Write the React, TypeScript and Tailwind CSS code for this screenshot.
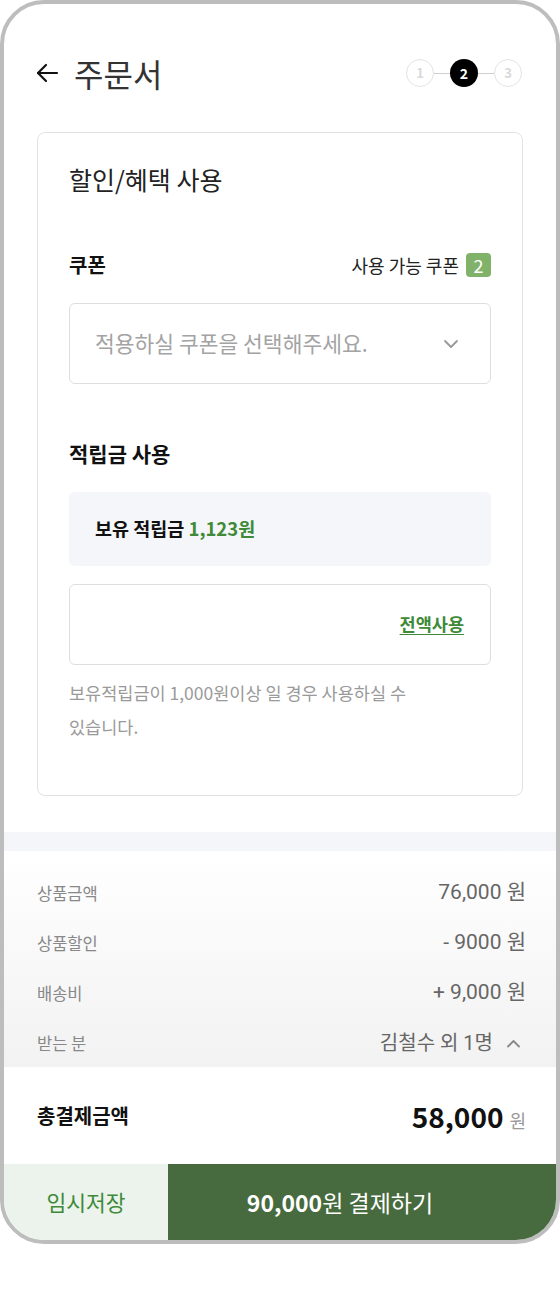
import React from "react";

const font = { fontFamily: '"Noto Sans CJK KR", "Noto Sans", sans-serif' };
const numFont = { fontFamily: 'Roboto, "Noto Sans CJK KR", sans-serif' };

const Step = ({ n, active }: { n: number; active?: boolean }) => (
	<div
		className={
			active
				? "flex h-7 w-7 items-center justify-center rounded-full bg-black text-[14px] font-bold text-white"
				: "flex h-7 w-7 items-center justify-center rounded-full border-[1.5px] border-[#e3e3e3] text-[13px] font-semibold text-[#d9d9d9]"
		}
	>
		{n}
	</div>
);

const SummaryRow = ({
	label,
	children,
}: {
	label: string;
	children: React.ReactNode;
}) => (
	<div className="flex h-[50px] items-center justify-between">
		<span className="text-[16.5px] text-[#888]">{label}</span>
		{children}
	</div>
);

export default function App() {
	return (
		<div className="min-h-[1296px] bg-white" style={font}>
			<div className="flex h-[1244px] w-[560px] flex-col overflow-hidden rounded-[44px] border-4 border-[#bdbdbd] bg-white">
				{/* Header */}
				<div className="mt-[49px] flex h-[40px] items-center justify-between pl-[31px] pr-[34px]">
					<div className="flex items-center gap-[15px]">
						<svg width="24" height="24" viewBox="0 0 24 24" fill="none" stroke="#111" strokeWidth={2.2} strokeLinecap="round" strokeLinejoin="round">
							<path d="M22 12H3" />
							<path d="M11 4l-8 8 8 8" />
						</svg>
						<span className="text-[32px] leading-[40px] text-[#333]">주문서</span>
					</div>
					<div className="flex items-center">
						<Step n={1} />
						<div className="h-px w-4 bg-[#cfcfcf]" />
						<Step n={2} active />
						<div className="h-px w-4 bg-[#cfcfcf]" />
						<Step n={3} />
					</div>
				</div>

				{/* Discount card */}
				<div className="mx-[33px] mt-[39px] rounded-[8px] border border-[#e2e2e5] px-[31px] pb-[51px] pt-[30px]">
					<div className="text-[25px] leading-[32px] text-[#222]">할인/혜택 사용</div>

					<div className="mt-[56px] flex h-[28px] items-center justify-between">
						<span className="text-[20px] font-bold text-[#111]">쿠폰</span>
						<div className="flex items-center gap-[7px]">
							<span className="text-[18px] text-[#222]">사용 가능 쿠폰</span>
							<span className="flex h-[24px] w-[25px] items-center justify-center rounded-[4px] bg-[#80b26a] text-[18px] leading-none text-white">
								2
							</span>
						</div>
					</div>

					<div className="mt-[24px] flex h-[81px] items-center justify-between rounded-[6px] border border-[#dedee0] pl-[25px] pr-[31px]">
						<span className="text-[21.5px] text-[#a3a3a3]">적용하실 쿠폰을 선택해주세요.</span>
						<svg width="16" height="10" viewBox="0 0 16 10" fill="none" stroke="#999" strokeWidth={1.8} strokeLinecap="round" strokeLinejoin="round">
							<path d="M2 2l6 6 6-6" />
						</svg>
					</div>

					<div className="mt-[55px] text-[21px] font-bold leading-[28px] text-[#111]">적립금 사용</div>

					<div className="mt-[25px] flex h-[74px] items-center rounded-[6px] bg-[#f5f6f9] px-[26px]">
						<span className="text-[18.5px] font-bold text-[#111]">
							보유 적립금 <span className="text-[#3e8a38]">1,123원</span>
						</span>
					</div>

					<div className="mt-[18px] flex h-[81px] items-center justify-end rounded-[6px] border border-[#dedee0] pr-[26px]">
						<span className="text-[17.5px] font-bold text-[#3e8a38] underline underline-offset-[3px]">전액사용</span>
					</div>

					<p className="mt-[11px] text-[17.5px] leading-[34px] text-[#9a9a9a]">
						보유적립금이 1,000원이상 일 경우 사용하실 수
						<br />
						있습니다.
					</p>
				</div>

				<div className="mt-[36px] h-[19px] bg-[#f5f6f9]" />

				{/* Summary */}
				<div className="h-[216px] bg-linear-to-b from-white to-[#f2f2f2] pl-[33px] pr-[30px] pt-[17px]">
					<SummaryRow label="상품금액">
						<span className="text-[21px] text-[#666]" style={numFont}>76,000 원</span>
					</SummaryRow>
					<SummaryRow label="상품할인">
						<span className="text-[21px] text-[#666]" style={numFont}>- 9000 원</span>
					</SummaryRow>
					<SummaryRow label="배송비">
						<span className="text-[21px] text-[#666]" style={numFont}>+ 9,000 원</span>
					</SummaryRow>
					<SummaryRow label="받는 분">
						<div className="flex items-center gap-[13px] pr-[5px]">
							<span className="text-[20px] text-[#666]" style={numFont}>김철수 외 1명</span>
							<svg width="15" height="9" viewBox="0 0 15 9" fill="none" stroke="#888" strokeWidth={1.8} strokeLinecap="round" strokeLinejoin="round">
								<path d="M2 7.5l5.5-5.5 5.5 5.5" />
							</svg>
						</div>
					</SummaryRow>
				</div>

				{/* Total */}
				<div className="flex h-[97px] items-center justify-between pl-[33px] pr-[30px]">
					<span className="text-[20px] font-bold text-[#111]">총결제금액</span>
					<div className="flex items-baseline gap-[6px]">
						<span className="text-[28px] font-bold text-[#111]">58,000</span>
						<span className="text-[18px] text-[#999]">원</span>
					</div>
				</div>

				{/* Buttons */}
				<div className="flex flex-1">
					<div className="flex w-[164px] items-center justify-center bg-[#ebf3ec] text-[21.5px] text-[#3e8a38]">
						임시저장
					</div>
					<div className="flex flex-1 items-center justify-center bg-[#476b3e] pr-[44px] text-[23px] text-white">
						<span className="font-bold">90,000</span>원 결제하기
					</div>
				</div>
			</div>
		</div>
	);
}
